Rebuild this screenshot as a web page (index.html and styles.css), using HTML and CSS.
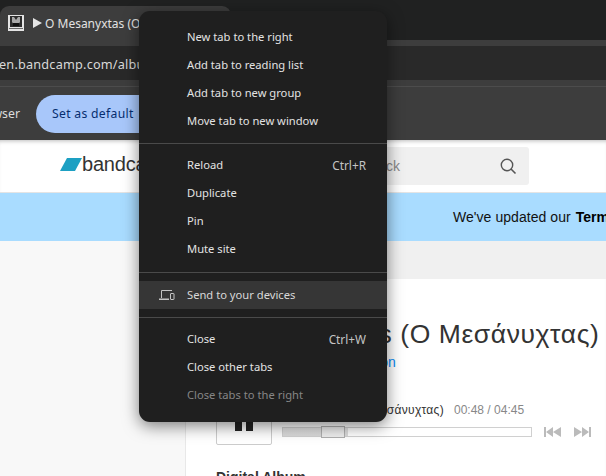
FILE: index.html
```html
<!DOCTYPE html>
<html lang="en">
<head>
<meta charset="utf-8">
<title>O Mesanyxtas</title>
<link rel="stylesheet" href="styles.css">
</head>
<body>
<div class="browser">
  <header class="chrome">
    <div class="tabstrip">
      <div class="tab">
        <svg class="favicon" width="16" height="16" viewBox="0 0 16 16">
          <rect width="16" height="16" fill="#e4e4e4"/>
          <rect x="2" y="1" width="12" height="11" fill="#2c2c2c"/>
          <path d="M4 2h2l2 3 2-3h2v5l-2 3H6L4 7z" fill="#a8a8a8"/>
          <rect x="5" y="8" width="6" height="3" fill="#111"/>
          <rect x="1" y="13" width="14" height="1" fill="#6a6a6a"/>
        </svg>
        <svg class="play" width="9" height="10" viewBox="0 0 9 10"><path d="M0 0l9 5-9 5z" fill="#e4e4e4"/></svg>
        <span class="tab-title">O Mesanyxtas (O Μεσάνυχτας)</span>
      </div>
    </div>
    <div class="addressbar"><div class="url">en.bandcamp.com/album/o-mesanyxtas</div></div>
    <div class="infobar">
      <div class="info-text"><span>Make this your default browser</span></div>
      <span class="pill">Set as default</span>
    </div>
  </header>
  <main class="page">
    <div class="site-header">
      <svg class="logo-mark" width="22" height="13" viewBox="0 0 22 13"><path d="M7 0h15l-7 13H0z" fill="#1da0c3"/></svg>
      <span class="logo-word">bandcamp</span>
      <div class="search">
        <span class="search-text">track</span>
        <svg width="17" height="17" viewBox="0 0 17 17"><circle cx="7" cy="7" r="5.7" fill="none" stroke="#555" stroke-width="1.4"/><path d="M11 11l4.5 4.500" stroke="#555" stroke-width="1.6"/></svg>
      </div>
    </div>
    <div class="banner">We've updated our <b>Terms of Use</b></div>
    <div class="body-row">
      <aside class="sidebar"></aside>
      <section class="content">
        <div class="band"></div>
        <div class="album">
          <h1 class="album-title">O Mesanyxtas (Ο Μεσάνυχτας)</h1>
          <div class="byline">by <a class="artist">Mesanyxtas Collaboration</a></div>
          <div class="player">
            <div class="play-btn"><span class="bar"></span><span class="bar"></span></div>
            <div class="player-main">
              <div class="track-line"><span class="track-name">O Mesanyxtas (Ο Μεσάνυχτας)</span><span class="time">00:48 / 04:45</span></div>
              <div class="controls">
                <div class="track-bar"><div class="loaded"></div><div class="thumb"></div></div>
                <svg class="skip" width="17" height="10" viewBox="0 0 17 10"><path d="M0 0h2v10H0zM2 5l7-5v10zM9 5l8-5v10z" fill="#bbb"/></svg>
                <svg class="skip" width="17" height="10" viewBox="0 0 17 10"><path d="M17 0h-2v10h2zM15 5L8 0v10zM8 5L0 0v10z" fill="#bbb"/></svg>
              </div>
            </div>
          </div>
          <div class="format">Digital Album</div>
        </div>
      </section>
    </div>
  </main>
</div>
<nav class="menu">
  <div class="item">New tab to the right</div>
  <div class="item">Add tab to reading list</div>
  <div class="item">Add tab to new group</div>
  <div class="item">Move tab to new window</div>
  <hr class="sep">
  <div class="item">Reload<span class="key">Ctrl+R</span></div>
  <div class="item">Duplicate</div>
  <div class="item">Pin</div>
  <div class="item">Mute site</div>
  <hr class="sep sep-low">
  <div class="item active">
    <svg class="item-icon" width="16" height="12" viewBox="0 0 16 12"><path d="M2.500 9V1.500h10.500" fill="none" stroke="#c4c4c4"/><rect x="0" y="9.500" width="10" height="1.500" fill="#c4c4c4"/><rect x="11.500" y="4.500" width="3.500" height="6" rx=".5" fill="none" stroke="#c4c4c4"/></svg>
    Send to your devices
  </div>
  <hr class="sep">
  <div class="item">Close<span class="key">Ctrl+W</span></div>
  <div class="item">Close other tabs</div>
  <div class="item disabled">Close tabs to the right</div>
</nav>
</body>
</html>
```
FILE: styles.css
```css
* { box-sizing: border-box; }
html, body { margin: 0; height: 100%; overflow: hidden; }
body { font-family: "Liberation Sans", Arial, sans-serif; background: #fff; }
.browser { width: 606px; height: 476px; overflow: hidden; display: flex; flex-direction: column; }
.chrome { height: 140px; flex: none; background: #3d3d3d; display: flex; flex-direction: column; }
.tabstrip { height: 40px; background: #202121; padding-top: 6px; }
.tab { width: 231px; height: 34px; background: #3d3d3d; border-radius: 9px 9px 0 0; display: flex; align-items: center; padding-left: 8px; overflow: hidden; white-space: nowrap; }
.favicon { flex: none; margin-right: 9px; }
.play { flex: none; margin-right: 3px; }
.tab-title { font: 12px "Noto Sans", sans-serif; color: #e2e2e2; }
.addressbar { height: 34px; margin-top: 6px; background: #292929; display: flex; align-items: center; overflow: hidden; }
.url { font: 12.700px "Noto Sans", sans-serif; color: #d8d8d8; white-space: nowrap; letter-spacing: 0.2px; margin-top: 1px; margin-left: -1px; }
.infobar { height: 54px; margin-top: 6px; border-top: 1px solid #4c4c4c; display: flex; align-items: center; }
.info-text { width: 36px; flex: none; overflow: hidden; display: flex; justify-content: flex-end; white-space: nowrap; padding-right: 16px; font: 12.300px "Noto Sans", sans-serif; color: #dcdcdc; }
.info-text span { flex: none; }
.pill { height: 38px; width: 130px; border-radius: 19px; background: #a8c7fa; color: #062e6f; font: 12.200px "Noto Sans", sans-serif; letter-spacing: .3px; display: flex; align-items: center; padding-left: 16px; }
.page { flex: 1; min-height: 0; display: flex; flex-direction: column; box-shadow: inset 0 4px 4px -3px #bbb; }
.site-header { height: 53px; flex: none; display: flex; align-items: center; padding-left: 60px; border-bottom: 1px solid #e4e4e4; }
.logo-mark { flex: none; margin-top: -3px; }
.logo-word { font-size: 20px; color: #333; letter-spacing: -.2px; margin-top: -3px; }
.search { width: 239px; height: 38px; margin-left: auto; margin-right: 77px; background: #f0f0f0; border-radius: 3px; display: flex; align-items: center; justify-content: flex-end; padding-right: 12px; }
.search-text { font-size: 14px; color: #888; margin-right: 100px; }
.banner { height: 48px; flex: none; background: #a9dcff; font-size: 14px; color: #111; display: flex; align-items: center; padding-left: 453px; white-space: nowrap; overflow: hidden; letter-spacing: .05px; }
.banner b { margin-left: 5px; color: #000; }
.body-row { flex: 1; min-height: 0; display: flex; }
.sidebar { width: 186px; flex: none; background: #f8f8f8; border-right: 1px solid #e8e8e8; }
.content { flex: 1; min-width: 0; overflow: hidden; }
.band { height: 38px; background: #f0f0f0; }
.album { padding-left: 30px; white-space: nowrap; }
.album-title { margin: 0; padding-top: 39px; font-size: 26.500px; line-height: 32px; font-weight: 400; color: #333; letter-spacing: .58px; }
.byline { width: 174px; text-align: right; font-size: 14px; line-height: 16px; margin-top: 4px; color: #333; }
.artist { color: #0687f5; }
.player { display: flex; gap: 10px; margin-top: 19px; height: 56px; }
.play-btn { width: 56px; height: 56px; flex: none; border: 1px solid #ccc; border-radius: 2px; display: flex; justify-content: center; align-items: center; gap: 4px; }
.bar { width: 7px; height: 28px; background: #222; }
.player-main { flex: 1; min-width: 0; padding-top: 14px; }
.track-line { font-size: 12px; color: #333; line-height: 14px; display: flex; gap: 10px; margin-left: -66px; letter-spacing: .3px; }
.track-name { width: 228px; flex: none; text-align: right; }
.time { color: #888; letter-spacing: 0; }
.controls { display: flex; align-items: center; margin-top: 10px; height: 10px; }
.track-bar { width: 250px; height: 10px; border: 1px solid #d0d0d0; position: relative; flex: none; }
.loaded { width: 65px; height: 100%; background: linear-gradient(#e4e4e4, #d8d8d8); }
.thumb { position: absolute; left: 38px; top: -2px; width: 24px; height: 12px; border: 1px solid #b0b0b0; background: #eee; }
.skip { margin-left: 12px; flex: none; }
.skip + .skip { margin-left: 13px; }
.format { font-size: 14px; font-weight: 700; color: #333; margin-top: 24px; line-height: 16px; }
.menu { position: absolute; left: 139px; top: 11px; width: 248px; height: 411px; padding: 12px 0; background: #1f1f1f; border-radius: 11px; box-shadow: 0 4px 16px rgba(0,0,0,.5); font: 11.200px "Noto Sans", sans-serif; color: #e3e3e3; }
.item { height: 28px; display: flex; align-items: center; padding: 0 21px 1px 48px; position: relative; }
.item.active { background: #363636; color: #d8d8d8; }
.item.disabled { color: #868686; }
.item-icon { position: absolute; left: 20px; top: 8px; }
.key { margin-left: auto; color: #c4c4c4; font-size: 11.800px; }
.sep { margin: 8px 0 7px; border: 0; height: 1px; background: #4a4a4a; }
.sep-low { margin: 9px 0 8px; }
```
